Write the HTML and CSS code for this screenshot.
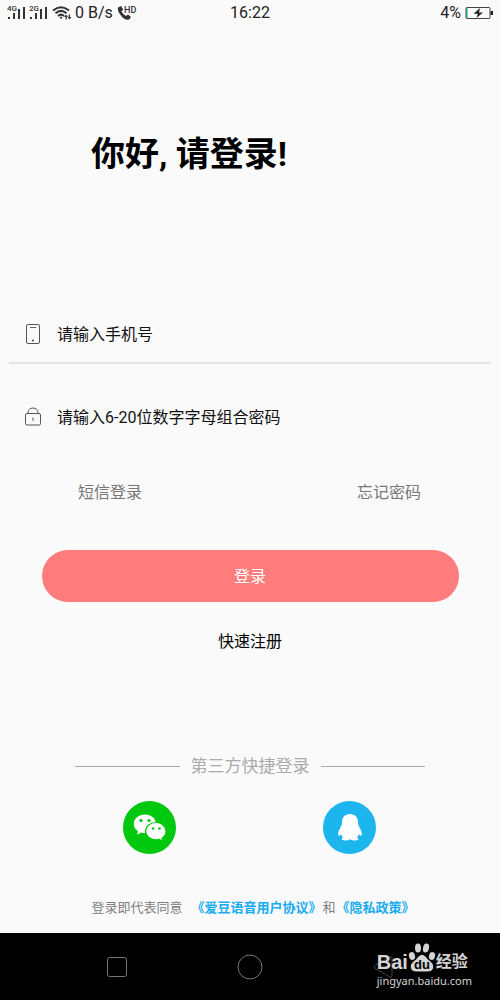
FILE: index.html
```html
<!DOCTYPE html>
<html lang="zh-CN">
<head>
<meta charset="utf-8">
<meta name="viewport" content="width=device-width, initial-scale=1">
<title>登录</title>
<link rel="stylesheet" href="styles.css">
</head>
<body class="screen">
<header class="status">
  <div class="status-left">
    <svg class="signal" width="42" height="16" viewBox="0 0 42 16" aria-hidden="true">
      <g fill="#333">
        <text x="0" y="6" class="signal-text">4G</text>
        <text x="22" y="6" class="signal-text">2G</text>
        <path d="M1 12h2v2H1zM6 8h2v6H6zM11 4h2v10h-2zM16 2h2v12h-2zM23 12h2v2h-2zM28 8h2v6h-2zM33 4h2v10h-2zM38 2h2v12h-2z"/>
      </g>
    </svg>
    <svg class="wifi" width="20" height="16" viewBox="0 0 20 16" aria-hidden="true">
      <path d="M1 5.500Q9 -1 17 5.500M3.500 8.300Q9 3.500 14.500 8.300M6 11Q9 8.300 12 11" fill="none" stroke="#333" stroke-width="2"/>
      <path d="M7.500 12.500L9 11.500l1.500 1L9 14zM14 9.500l2 2.500h-1.200v2.500h-1.300V12H12zM17.500 14.500l-2-2.500h1.200V9.500H18V12h1.500z" fill="#333"/>
    </svg>
    <span>0 B/s</span>
    <svg class="call" width="20" height="16" viewBox="0 0 20 16" aria-hidden="true">
      <path d="M1 2.500L4 1l2.200 3.500-1.700 2Q6 9.500 9 11l2-1.500 3 2.500-1.800 2.500Q8 16 4 10.500 0 6 1 2.500z" fill="#333"/>
      <text x="7" y="8" class="hd-text" fill="#333">HD</text>
    </svg>
  </div>
  <time>16:22</time>
  <div class="status-right">
    <span>4%</span>
    <svg width="28" height="14" viewBox="0 0 28 14" aria-hidden="true">
      <rect x="1" y="1.500" width="24" height="11" rx="1" fill="none" stroke="#444"/>
      <path d="M1 2h1.500v10H1z" fill="#1aa57a"/>
      <path d="M25.500 5H28v4h-2.500zM15 2L8.500 7.800h4.300L11.500 12 18 6.500h-4z" fill="#222"/>
    </svg>
  </div>
</header>

<main class="login">
  <h1 class="title">你好, 请登录!</h1>
  <form class="form">
    <div class="field field-phone">
      <label for="phone" aria-label="手机号">
        <svg class="field-icon" width="16" height="22" viewBox="0 0 16 22" aria-hidden="true">
          <rect x="1.500" y="1.500" width="13" height="19" rx="1.500" fill="none" stroke="#555"/>
          <path d="M5 4.500h6" stroke="#666"/><circle cx="8" cy="17.500" r="1" fill="#444"/>
        </svg>
      </label>
      <input class="input" id="phone" type="tel" placeholder="请输入手机号">
    </div>
    <div class="field">
      <label for="password" aria-label="密码">
        <svg class="field-icon" width="16" height="22" viewBox="0 0 16 22" aria-hidden="true">
          <rect x=".500" y="7.500" width="15" height="11.500" rx="1.500" fill="none" stroke="#555"/>
          <path d="M3 7.500V6.500a5 4.500 0 0 1 10 0v1M8 11.500v3.500" fill="none" stroke="#555"/>
        </svg>
      </label>
      <input class="input" id="password" type="password" placeholder="请输入6-20位数字字母组合密码">
    </div>
    <div class="options">
      <a class="option" href="#">短信登录</a>
      <a class="option" href="#">忘记密码</a>
    </div>
    <button class="submit" type="button">登录</button>
  </form>
  <a class="register" href="#">快速注册</a>

  <div class="divider"><span>第三方快捷登录</span></div>
  <div class="social">
    <button class="social-button wechat" type="button" aria-label="微信登录">
      <svg width="53" height="53" viewBox="0 0 53 53" aria-hidden="true">
        <path d="M22 13.500c-6.300 0-11.200 4-11.200 9.400 0 3 1.600 5.600 4.200 7.300l-1 3.500 4.200-2.100c1.200.4 2.500.6 4 .6 6.200 0 10.800-4 10.800-9.300 0-5.400-4.800-9.400-11-9.400z" fill="#fff"/>
        <path d="M33 21.500c-5.900 0-10.400 3.800-10.400 8.600 0 5 4.500 8.700 10.400 8.700 1.100 0 2.200-.1 3.200-.4l3.600 1.900-.8-3.100c2.400-1.600 4-4.200 4-7 0-4.900-4.500-8.700-10-8.700z" fill="#fff" stroke="#00c80f" stroke-width="1.200"/>
        <g fill="#00c80f"><circle cx="18" cy="19.500" r="1.600"/><circle cx="26" cy="19.500" r="1.600"/><circle cx="30" cy="27.500" r="1.300"/><circle cx="36.500" cy="27.500" r="1.300"/></g>
      </svg>
    </button>
    <button class="social-button qq" type="button" aria-label="QQ登录">
      <svg width="53" height="53" viewBox="0 0 53 53" aria-hidden="true">
        <path d="M27 13c-5 0-8 3.600-8 8v2.500c-1 1-1.500 2-1.300 3-2 2.500-3 5.500-2.300 7.700.5 1.300 1.700.2 2.700-1.200.3 1.400 1 2.600 2 3.600-2.500 1.200-1.800 2.900 1.500 2.900 2.300 0 4.300-.4 5.400-1.300 1.100.9 3.100 1.300 5.400 1.300 3.300 0 4-1.700 1.500-2.900 1-1 1.700-2.200 2-3.600 1 1.400 2.200 2.500 2.700 1.200.7-2.200-.3-5.200-2.300-7.700.2-1-.3-2-1.300-3V21c0-4.400-3-8-8-8z" fill="#fff"/>
      </svg>
    </button>
  </div>
  <p class="terms"><span>登录即代表同意</span><a class="terms-link first" href="#">《爱豆语音用户协议》</a><span>和</span><a class="terms-link" href="#">《隐私政策》</a></p>
</main>

<nav class="navbar">
  <button class="nav-button" type="button" aria-label="最近任务"><svg width="26" height="26" viewBox="0 0 26 26"><rect x="3.500" y="3.500" width="19" height="19" rx="2" fill="none" stroke="#777"/></svg></button>
  <button class="nav-button" type="button" aria-label="主页"><svg width="26" height="26" viewBox="0 0 26 26"><circle cx="13" cy="13" r="12" fill="none" stroke="#777"/></svg></button>
  <button class="nav-button" type="button" aria-label="返回"><svg width="26" height="26" viewBox="0 0 26 26"><path d="M20 3L5 11.500q-2 1.500 0 3L20 23q2 1 2-1V4q0-2-2-1z" fill="none" stroke="#444"/></svg></button>
  <div class="watermark">
    <div class="brand">
      <span class="brand-latin">Bai</span>
      <svg class="paw" width="28" height="32" viewBox="0 0 28 32" aria-hidden="true">
        <g fill="#d4d4d4"><ellipse cx="4" cy="14" rx="3" ry="4" transform="rotate(-15 4 14)"/><ellipse cx="10" cy="6" rx="3" ry="4.500"/><ellipse cx="18" cy="6" rx="3" ry="4.500" transform="rotate(12 18 6)"/><ellipse cx="24" cy="14" rx="3" ry="4" transform="rotate(15 24 14)"/>
        <path d="M14 13c-3 0-4 2.500-6 4.500-3 2.500-6 4.500-5 8.500 1 4 5 3.500 11 3.500s10 .5 11-3.500c1-4-2-6-5-8.500-2-2-3-4.500-6-4.500z"/></g>
        <text x="14" y="27" class="paw-text" text-anchor="middle">du</text>
      </svg>
      <span class="brand-cjk">经验</span>
    </div>
    <div class="brand-url">jingyan.baidu.com</div>
  </div>
</nav>
</body>
</html>
```
FILE: styles.css
```css
* { box-sizing: border-box; }

.screen {
  margin: 0;
  min-height: 100vh;
  display: flex;
  flex-direction: column;
  background: #fafafa;
  color: #000;
  font-family: Roboto, "Noto Sans CJK SC", sans-serif;
  font-size: 16px;
  line-height: 24px;
}

a { color: inherit; text-decoration: none; }

button {
  border: 0;
  padding: 0;
  font: inherit;
  background: none;
  cursor: pointer;
}

.status {
  display: grid;
  grid-template-columns: 1fr auto 1fr;
  align-items: center;
  height: 26px;
  padding: 0 7px;
  color: #222;
}

.status-left,
.status-right { display: flex; align-items: center; }
.status-right { justify-content: flex-end; gap: 4px; }
.wifi { margin: 0 3px 0 3px; }
.call { margin-left: 4px; }
.signal-text { font-size: 8px; font-weight: 500; }
.hd-text { font-size: 9px; font-weight: 500; }

.login {
  flex: 1;
  display: flex;
  flex-direction: column;
}

.title {
  margin: 104px 0 0 91px;
  font-size: 34px;
  line-height: 48px;
  font-weight: 700;
}

.form { margin-top: 128px; }

.field {
  display: flex;
  align-items: center;
  gap: 16px;
  height: 58px;
  margin: 0 9px;
  padding: 0 16px;
}

.field-phone {
  border-bottom: 2px solid #e4e4e4;
  margin-bottom: 24px;
}

.field-icon { display: block; }

.input {
  flex: 1;
  min-width: 0;
  border: 0;
  padding: 2px 0 0;
  outline: 0;
  background: none;
  font: inherit;
}

.input::placeholder { color: #111; opacity: 1; }

.options {
  display: flex;
  justify-content: space-between;
  margin-top: 35px;
  padding: 0 79px 0 78px;
  color: #777;
}

.submit {
  display: block;
  width: calc(100% - 83px);
  height: 52px;
  margin: 45px auto 0;
  padding-top: 2px;
  border-radius: 26px;
  background: #ff7c7c;
  color: #fff;
}

.register { align-self: center; margin-top: 28px; }

.divider {
  display: flex;
  align-items: center;
  gap: 11px;
  margin-top: 100px;
  padding: 0 75px;
  color: #aaa;
  font-size: 17px;
}

.divider::before,
.divider::after {
  content: "";
  flex: 1;
  height: 1px;
  background: #aaa;
}

.social {
  display: grid;
  grid-template-columns: 1fr 1fr;
  justify-items: center;
  margin-top: 23px;
  padding: 0 51px 0 49px;
}

.social-button {
  width: 53px;
  height: 53px;
  border-radius: 50%;
}

.social-button svg { display: block; }
.wechat { background: #00c80f; }
.qq { background: #1cb5ee; }

.terms {
  display: flex;
  justify-content: center;
  gap: 1px;
  margin: 42px 0 13px;
  padding-left: 6px;
  color: #808080;
  font-size: 13px;
}

.terms-link { color: #1aabf0; font-weight: 700; }
.first { margin-left: 8px; }

.navbar {
  position: relative;
  display: grid;
  grid-template-columns: repeat(3, 1fr);
  height: 67px;
  padding: 0 50px;
  background: #000;
}

.nav-button { display: grid; place-items: center; }

.watermark {
  position: absolute;
  right: 28px;
  bottom: 12px;
  color: #d4d4d4;
}

.brand {
  display: flex;
  align-items: flex-end;
  height: 32px;
}

.brand-latin {
  font-family: "Liberation Sans", sans-serif;
  font-size: 20px;
  font-weight: 700;
}

.brand-cjk { font-size: 16px; font-weight: 700; }
.paw-text { font: 700 13px "Liberation Sans", sans-serif; fill: #000; }

.brand-url {
  font-family: "Noto Sans", sans-serif;
  font-size: 11px;
  line-height: 14px;
}
```
